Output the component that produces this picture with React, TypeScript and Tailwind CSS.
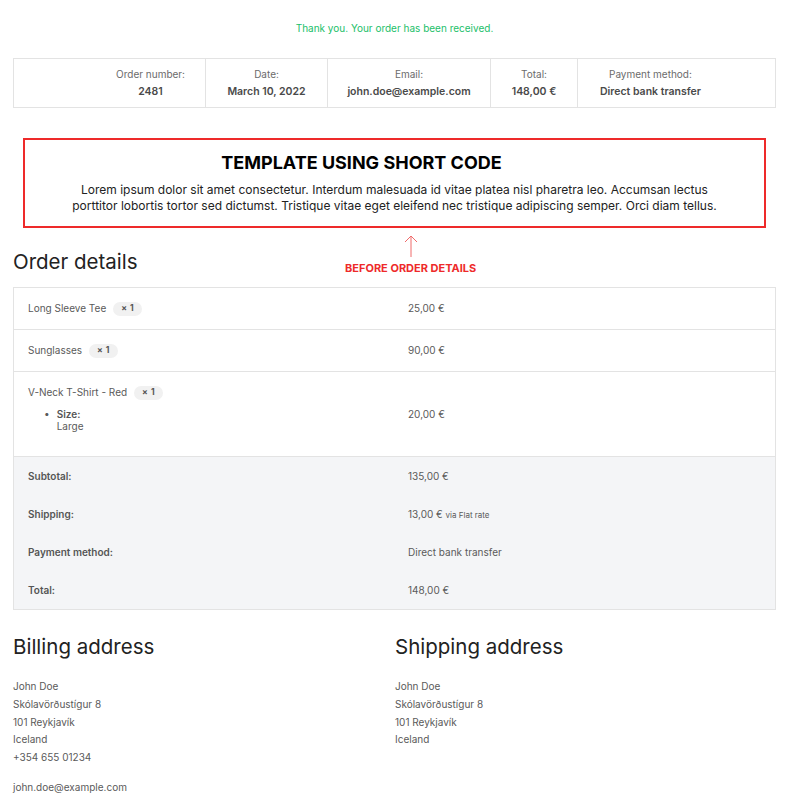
import React from "react";

const font = { fontFamily: "Inter, 'Noto Sans', sans-serif" };

type Item = { name: string; qty: number; price: string; meta?: { label: string; value: string } };

const items: Item[] = [
  { name: "Long Sleeve Tee", qty: 1, price: "25,00 €" },
  { name: "Sunglasses", qty: 1, price: "90,00 €" },
  { name: "V-Neck T-Shirt - Red", qty: 1, price: "20,00 €", meta: { label: "Size:", value: "Large" } },
];

function Overview() {
  return (
    <div className="mt-[22px] flex h-[50px] border border-[#e3e3e3]">
      <div className="flex w-[192px] items-center justify-end border-r border-[#e3e3e3] pr-[20px]">
        <Cell label="Order number:" value="2481" />
      </div>
      <div className="flex w-[122px] items-center justify-center border-r border-[#e3e3e3]">
        <Cell label="Date:" value="March 10, 2022" />
      </div>
      <div className="flex w-[163px] items-center justify-center border-r border-[#e3e3e3]">
        <Cell label="Email:" value="john.doe@example.com" />
      </div>
      <div className="flex w-[87px] items-center justify-center border-r border-[#e3e3e3]">
        <Cell label="Total:" value="148,00 €" />
      </div>
      <div className="flex flex-1 items-center justify-start pl-[22px]">
        <Cell label="Payment method:" value="Direct bank transfer" />
      </div>
    </div>
  );
}

function Cell({ label, value }: { label: string; value: string }) {
  return (
    <div className="flex flex-col items-center leading-[17px]">
      <span className="text-[10px] text-[#6b6b6b]">{label}</span>
      <span className="text-[10.5px] font-semibold text-[#4a4a4a]">{value}</span>
    </div>
  );
}

function Badge({ qty }: { qty: number }) {
  return (
    <span className="ml-[7px] inline-flex h-[14px] items-center gap-[3px] rounded-full bg-[#f1f1f1] px-[8px] text-[8.5px] font-bold text-[#555]">
      <span>×</span>
      <span>{qty}</span>
    </span>
  );
}

function OrderTable() {
  return (
    <div className="border border-[#e3e3e3] text-[10px] text-[#5a5a5a]">
      {items.map((it) => (
        <div
          key={it.name}
          className={`grid grid-cols-[380px_1fr] border-b border-[#e3e3e3] ${it.meta ? "h-[85px]" : "h-[42px]"}`}
        >
          <div className={`flex flex-col px-[14px] ${it.meta ? "pt-[13px]" : "justify-center"}`}>
            <div className="flex items-center">
              <span>{it.name}</span>
              <Badge qty={it.qty} />
            </div>
            {it.meta && (
              <ul className="mt-[8px] pl-[16px] leading-[12px]">
                <li className="flex">
                  <span className="mr-[7px] mt-[-1px]">•</span>
                  <div className="flex flex-col">
                    <span className="font-semibold text-[#555]">{it.meta.label}</span>
                    <span>{it.meta.value}</span>
                  </div>
                </li>
              </ul>
            )}
          </div>
          <div className="flex items-center px-[14px]">{it.price}</div>
        </div>
      ))}
      <div className="bg-[#f4f5f7]">
        <TotalRow label="Subtotal:" value={<>135,00 €</>} />
        <TotalRow
          label="Shipping:"
          value={
            <>
              13,00 € <span className="text-[8px]">via Flat rate</span>
            </>
          }
        />
        <TotalRow label="Payment method:" value={<>Direct bank transfer</>} />
        <TotalRow label="Total:" value={<>148,00 €</>} />
      </div>
    </div>
  );
}

function TotalRow({ label, value }: { label: string; value: React.ReactNode }) {
  return (
    <div className="grid h-[38px] grid-cols-[380px_1fr] items-center">
      <div className="px-[14px] font-semibold text-[#555]">{label}</div>
      <div className="px-[14px]">{value}</div>
    </div>
  );
}

function Address({ title, lines, email }: { title: string; lines: string[]; email?: string }) {
  return (
    <div>
      <h2 className="text-[20.5px] leading-[28px] text-[#222]">{title}</h2>
      <div className="mt-[17px] text-[10px] leading-[17.75px] text-[#5a5a5a]">
        {lines.map((l) => (
          <div key={l}>{l}</div>
        ))}
        {email && <div className="mt-[12px]">{email}</div>}
      </div>
    </div>
  );
}

export default function App() {
  return (
    <div className="min-h-[809px] bg-white pb-[20px] pl-[13px] pr-[20px]" style={font}>
      <p className="pt-[20px] text-center text-[10px] leading-[16px] text-[#22c06a]">
        Thank you. Your order has been received.
      </p>

      <Overview />

      <div className="mx-[10px] mt-[30px] flex h-[90px] flex-col items-center border-2 border-[#ee2a2a] pt-[10px]">
        <h3 className="pr-[66px] text-[18px] font-bold leading-[26px] text-black">TEMPLATE USING SHORT CODE</h3>
        <p className="mt-[6px] text-center text-[12px] leading-[16px] text-[#222]">
          Lorem ipsum dolor sit amet consectetur. Interdum malesuada id vitae platea nisl pharetra leo. Accumsan lectus
          <br />
          porttitor lobortis tortor sed dictumst. Tristique vitae eget eleifend nec tristique adipiscing semper. Orci diam tellus.
        </p>
      </div>

      <div className="mt-[7px] flex items-end">
        <h2 className="w-[332px] text-[20.5px] leading-[28px] text-[#222]">Order details</h2>
        <div className="flex flex-col items-center">
          <svg width="14" height="22" viewBox="0 0 14 22" fill="none" stroke="#f06a6a" strokeWidth="1">
            <path d="M7 1 V22 M1 7 L7 1 L13 7" />
          </svg>
          <span className="mt-[3px] text-[11px] font-bold leading-[16px] text-[#ee2a2a]">BEFORE ORDER DETAILS</span>
        </div>
      </div>

      <div className="mt-[11px]">
        <OrderTable />
      </div>

      <div className="mt-[23px] grid grid-cols-[382px_1fr]">
        <Address
          title="Billing address"
          lines={["John Doe", "Skólavörðustígur 8", "101 Reykjavík", "Iceland", "+354 655 01234"]}
          email="john.doe@example.com"
        />
        <Address title="Shipping address" lines={["John Doe", "Skólavörðustígur 8", "101 Reykjavík", "Iceland"]} />
      </div>
    </div>
  );
}
